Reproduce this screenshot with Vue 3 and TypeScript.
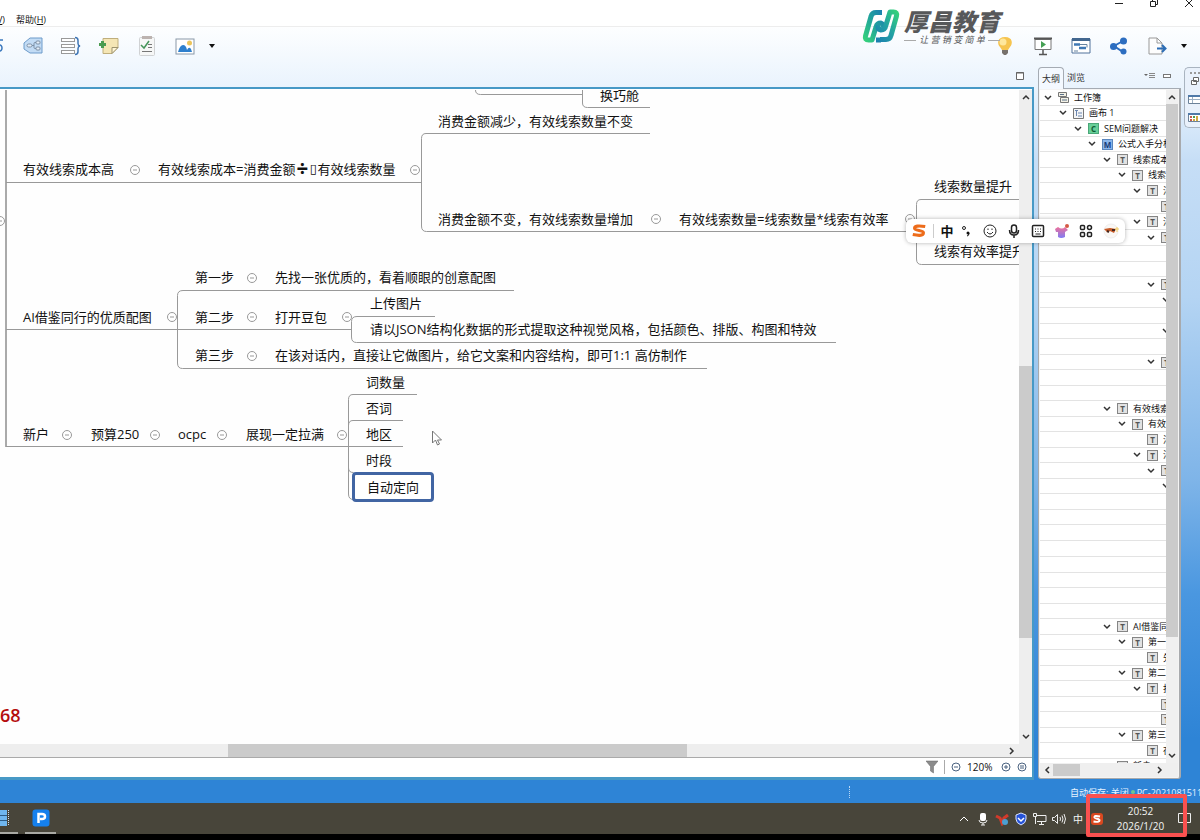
<script setup lang="ts">
interface Topic { x: number; y: number; text: string; selected?: boolean }
interface Row { level: number; icon?: 'book' | 'sheet' | 'C' | 'M' | 'T'; text?: string; open?: boolean }

const topics: Topic[] = [
  { x: 600, y: 5, text: '换巧舱' },
  { x: 438, y: 31, text: '消费金额减少，有效线索数量不变' },
  { x: 23, y: 79, text: '有效线索成本高' },
  { x: 438, y: 129, text: '消费金额不变，有效线索数量增加' },
  { x: 679, y: 129, text: '有效线索数量=线索数量*线索有效率' },
  { x: 934, y: 96, text: '线索数量提升' },
  { x: 934, y: 161, text: '线索有效率提升' },
  { x: 195, y: 187, text: '第一步' },
  { x: 275, y: 187, text: '先找一张优质的，看着顺眼的创意配图' },
  { x: 23, y: 227, text: 'AI借鉴同行的优质配图' },
  { x: 195, y: 227, text: '第二步' },
  { x: 275, y: 227, text: '打开豆包' },
  { x: 370, y: 213, text: '上传图片' },
  { x: 370, y: 239, text: '请以JSON结构化数据的形式提取这种视觉风格，包括颜色、排版、构图和特效' },
  { x: 195, y: 265, text: '第三步' },
  { x: 275, y: 265, text: '在该对话内，直接让它做图片，给它文案和内容结构，即可1:1 高仿制作' },
  { x: 366, y: 292, text: '词数量' },
  { x: 366, y: 318, text: '否词' },
  { x: 366, y: 344, text: '地区' },
  { x: 366, y: 370, text: '时段' },
  { x: 352, y: 397, text: '自动定向', selected: true },
  { x: 23, y: 344, text: '新户' },
  { x: 91, y: 344, text: '预算250' },
  { x: 178, y: 344, text: 'ocpc' },
  { x: 246, y: 344, text: '展现一定拉满' },
]
const folds: [number, number][] = [
  [0, 131], [135, 80], [415, 80], [656, 129], [910, 129], [252, 188], [172, 227], [252, 227],
  [347, 227], [252, 266], [67, 345], [155, 345], [222, 345], [342, 345],
]
const place = (t: Topic) => ({ left: `${t.x}px`, top: `${t.y - (t.selected ? 15 : 10)}px` })

const blank = (n: number): Row[] => Array.from({ length: n }, () => ({ level: 0 }))
const rows: Row[] = [
  { level: 0, icon: 'book', text: '工作簿', open: true },
  { level: 1, icon: 'sheet', text: '画布 1', open: true },
  { level: 2, icon: 'C', text: 'SEM问题解决', open: true },
  { level: 3, icon: 'M', text: '公式入手分析', open: true },
  { level: 4, icon: 'T', text: '线索成本高', open: true },
  { level: 5, icon: 'T', text: '线索成本', open: true },
  { level: 6, icon: 'T', text: '消费', open: true },
  { level: 7, icon: 'T' },
  { level: 6, icon: 'T', text: '消费', open: true },
  { level: 7, icon: 'T', open: true },
  ...blank(2),
  { level: 7, icon: 'T', open: true },
  { level: 8, open: true },
  ...blank(1),
  { level: 8, open: true },
  ...blank(1),
  { level: 7, icon: 'T', open: true },
  ...blank(2),
  { level: 4, icon: 'T', text: '有效线索成本高', open: true },
  { level: 5, icon: 'T', text: '有效线索', open: true },
  { level: 6, icon: 'T', text: '消费' },
  { level: 6, icon: 'T', text: '消费', open: true },
  { level: 7, icon: 'T', open: true },
  { level: 8, open: true },
  ...blank(8),
  { level: 4, icon: 'T', text: 'AI借鉴同行的优质配图', open: true },
  { level: 5, icon: 'T', text: '第一步', open: true },
  { level: 6, icon: 'T', text: '先找' },
  { level: 5, icon: 'T', text: '第二步', open: true },
  { level: 6, icon: 'T', text: '打开', open: true },
  { level: 7, icon: 'T' },
  { level: 7, icon: 'T' },
  { level: 5, icon: 'T', text: '第三步', open: true },
  { level: 6, icon: 'T', text: '在该' },
  { level: 4, icon: 'T', text: '新户' },
]
const indent = (level: number) => ({ paddingLeft: `${Math.round(level * 14.75) + 4}px` })
</script>

<template>
  <div class="screen">
    <div class="window">
      <header class="menubar">
        <nav class="menus">
          <button type="button" class="menu cut">(<u>V</u>)</button>
          <button type="button" class="menu">帮助(<u>H</u>)</button>
        </nav>
        <div class="winctl">
          <button type="button" aria-label="最小化"><svg width="10" height="10"><path d="M1 5.500h8" stroke="#222" /></svg></button>
          <button type="button" aria-label="还原"><svg width="10" height="10" fill="none" stroke="#222"><path d="M1.500 3.500h5v5h-5zM3.500 3V1.500h5v5H7" /></svg></button>
          <button type="button" aria-label="关闭"><svg width="10" height="10"><path d="M1 1l8 8M9 1L1 9" stroke="#222" /></svg></button>
        </div>
      </header>

      <div class="toolbar">
        <div class="tools">
          <button type="button" class="sliver" aria-label="联系"><svg width="4" height="16" viewBox="0 0 4 16" fill="none" stroke="#3b78bd" stroke-width="1.500"><path d="M3 2H-1v5C3 6 3 14 -1 13" /></svg></button>
          <button type="button" aria-label="外框"><svg width="20" height="20" viewBox="0 0 20 20" fill="none"><path d="M1 7l6-5h12v15H7l-6-4z" fill="#c3dcf5" stroke="#6d9bca" /><rect x="4" y="8" width="5" height="3" rx="1.500" fill="#e4eef8" stroke="#7c8fa5" /><path d="M9 9.500h2M15 6.500h-3q-1 0-1 1v4q0 1 1 1h3" stroke="#7c8fa5" /><rect x="13" y="5" width="4" height="3" rx="1" fill="#e4eef8" stroke="#7c8fa5" /><rect x="13" y="11" width="4" height="3" rx="1" fill="#e4eef8" stroke="#7c8fa5" /></svg></button>
          <button type="button" aria-label="概要"><svg width="20" height="20" viewBox="0 0 20 20" fill="none"><g fill="#fff" stroke="#999"><rect x=".5" y="2.500" width="13" height="3" /><rect x=".5" y="8.500" width="13" height="3" /><rect x=".5" y="14.500" width="13" height="3" /></g><path d="M14 1.500q3 0 3 3v3q0 2 2 2.500-2 .5-2 2.500v3q0 3-3 3" stroke="#3f76b5" stroke-width="1.500" /></svg></button>
          <button type="button" aria-label="备注"><svg width="20" height="20" viewBox="0 0 20 20"><path d="M4 2.500h15v9l-6 6H4z" fill="#f5e6b5" stroke="#bfae7c" /><path d="M19 11.500h-6v6z" fill="#fff6d6" stroke="#9d936f" /><path d="M0 8.500h7M3.500 5v7" stroke="#4b9b50" stroke-width="3" /></svg></button>
          <button type="button" aria-label="任务"><svg width="20" height="20" viewBox="0 0 20 20"><rect x="2.500" y="1.500" width="15" height="18" rx="1" fill="#f6f7f7" stroke="#d0d2d4" /><rect x="5" y="0" width="10" height="3" fill="#bcb3b0" /><path d="M4 9l3 3 5-7" fill="none" stroke="#45955a" stroke-width="1.500" /><path d="M11 8.500h4M11 11.500h4M5 15.500h10" stroke="#777" /></svg></button>
          <button type="button" aria-label="图片"><svg width="20" height="20" viewBox="0 0 20 20"><rect x="1" y="3" width="18" height="15" fill="#fff" stroke="#8998a8" /><path d="M3 16q2-7 5-7t4 5q2-4 4-1l1 3z" fill="#2e7fcd" /><circle cx="14.500" cy="7" r="2.500" fill="#ecc45c" /></svg></button>
          <button type="button" class="caret" aria-label="更多插入"><svg width="8" height="8"><path d="M1 2h6L4 6z" fill="#111" /></svg></button>
        </div>
        <div class="tools">
          <button type="button" aria-label="灵感"><svg width="20" height="20" viewBox="0 0 20 20"><path d="M10 1c8 0 8 7 5 10l-2 3H7l-2-3C2 8 2 1 10 1z" fill="#f6c44f" /><circle cx="8" cy="6" r="3.500" fill="#fee79d" /><path d="M7 14h6v3l-2 2H9l-2-2z" fill="#77716c" /></svg></button>
          <button type="button" aria-label="演示"><svg width="20" height="20" viewBox="0 0 20 20"><path d="M2 3.500h16v10H2z" fill="#fff" stroke="#777" /><path d="M1 2.500h18" stroke="#555" stroke-width="2" /><path d="M8 5l5 3.500L8 12z" fill="#45a054" /><path d="M10 14v4M6 18.500h8" stroke="#555" stroke-width="1.500" /></svg></button>
          <button type="button" aria-label="甘特图"><svg width="20" height="20" viewBox="0 0 20 20"><path d="M1 3h18v14H1z" fill="#fff" stroke="#50729b" /><path d="M1 3.500h18" stroke="#42678f" stroke-width="3" /><path d="M3 8.500h6M8 12h7" stroke="#3f78b4" stroke-width="2.500" /><path d="M9 8.500h7v3M3 15h4" fill="none" stroke="#65829f" /></svg></button>
          <button type="button" aria-label="分享"><svg width="20" height="20" viewBox="0 0 20 20" fill="#2c6dc0"><path d="M14 5L5 10l9 6" fill="none" stroke="#2c6dc0" stroke-width="2" /><circle cx="14.500" cy="5" r="3.500" /><circle cx="4.500" cy="10.500" r="3.500" /><circle cx="14.500" cy="15.500" r="3" /></svg></button>
          <button type="button" aria-label="导出"><svg width="20" height="20" viewBox="0 0 20 20"><path d="M2 2h8l5 5v11H2z" fill="#fdfdfd" stroke="#999" /><path d="M10 2v5h5" fill="none" stroke="#999" /><path d="M10 12.500h8M15 9l3.500 3.500L15 16" fill="none" stroke="#2c6db5" stroke-width="2" /></svg></button>
          <button type="button" class="caret" aria-label="更多导出"><svg width="8" height="8"><path d="M1 2h6L4 6z" fill="#111" /></svg></button>
        </div>
      </div>

      <div class="brand">
        <svg width="38" height="34" viewBox="0 0 38 34" fill="none" stroke-linejoin="round">
          <defs>
            <linearGradient id="leafA" x1="0" y1="1" x2="1" y2="0"><stop offset="0" stop-color="#34d07c" /><stop offset=".5" stop-color="#22a69a" /><stop offset="1" stop-color="#1b7fb0" /></linearGradient>
            <linearGradient id="leafB" x1="0" y1="1" x2="1" y2="0"><stop offset="0" stop-color="#1b7fb0" /><stop offset=".5" stop-color="#22a0a4" /><stop offset="1" stop-color="#34d07c" /></linearGradient>
          </defs>
          <path d="M20 3.500h-6q-4 0-5 4L3.500 27q-1 4 3 4H10l4-13q1-4 5-4 3 1 2 5" stroke="url(#leafA)" stroke-width="5" />
          <path d="M18 30.500h6q4 0 5-4L34.500 7q1-4-3-4H28l-4 13q-1 5-5 5-4-1-3-5M14 31h5" stroke="url(#leafB)" stroke-width="5" />
        </svg>
        <div class="brandtext">
          <strong>厚昌教育</strong>
          <small>让 营 销 变 简 单</small>
        </div>
      </div>

      <main class="workspace">
        <section class="editor">
          <div class="editorstrip">
            <button type="button" aria-label="最大化"><svg width="10" height="10"><path d="M1.500 1.500h7v7h-7z" fill="#fff" stroke="#666" /><path d="M1 2h8" stroke="#666" /></svg></button>
          </div>
          <div class="frame">
            <div class="viewport">
              <div class="canvas">
                <svg class="links" width="1019" height="420" fill="none" stroke="#999">
                  <path d="M6 0V357" stroke="#aaa" stroke-width="2" />
                  <path d="M475.500 0q0 4.500 5 4.500H583M582.500 0V13q0 4.500 5 4.500H650" />
                  <path d="M6 92.500H421M650 43.500H426q-4.500 0-4.500 5V136q0 5.500 5 5.500H917" />
                  <path d="M1019 109.500H921q-4.500 0-4.500 5V169q0 5.500 5 5.500H1019" />
                  <path d="M514 200.500H183q-5.500 0-5.500 5V273q0 5.500 5 5.500H707M6 239.500H352" />
                  <path d="M435 226.500H357q-5.500 0-5.500 5V247q0 5.500 5 5.500H836" />
                  <path d="M6 356.500H403M417 304.500H353q-4.500 0-4.500 5V404q0 5.500 5 5.500M403 330.500H353q-4.500 0-4.500 5M348.500 378q0 4.500 5 4.500" />
                </svg>
                <svg class="links" width="1019" height="420" fill="#fff" stroke="#999">
                  <g v-for="([x, y], i) in folds" :key="i"><circle :cx="x" :cy="y" r="4.500" /><path :d="`M${x - 2} ${y}h4`" /></g>
                </svg>
                <span v-for="(t, i) in topics" :key="i" class="topic" :class="{ selected: t.selected }" :style="place(t)">{{ t.text }}</span>
                <span class="topic formula">有效线索成本=消费金额<b>÷</b><i>▯</i>有效线索数量</span>
                <span class="total">68</span>
                <svg class="pointer" width="10" height="16" viewBox="0 0 10 16"><path d="M.5 1v12l3-3 2 5 2-1-2-4h4z" fill="#fff" stroke="#777" /></svg>
              </div>
              <div class="vbar">
                <button type="button" aria-label="向上"><svg width="8" height="6"><path d="M1 5l3-3 3 3" fill="none" stroke="#333" stroke-width="1.500" /></svg></button>
                <div class="track"><span class="before"></span><span class="thumb"></span><span class="after"></span></div>
                <button type="button" aria-label="向下"><svg width="8" height="6"><path d="M1 1l3 3 3-3" fill="none" stroke="#333" stroke-width="1.500" /></svg></button>
              </div>
            </div>
            <div class="hbar">
              <span class="before"></span><span class="thumb"></span><span class="after"></span>
              <button type="button" aria-label="向右"><svg width="6" height="8"><path d="M1 1l3 3-3 3" fill="none" stroke="#333" stroke-width="1.500" /></svg></button>
            </div>
            <div class="zoombar">
              <button type="button" aria-label="筛选"><svg width="12" height="14" viewBox="0 0 12 14"><path d="M0 1h12L7.500 6.500V13l-3-2V6.500z" fill="#8b8b8b" stroke="#666" stroke-width=".5" /></svg></button>
              <span class="rule"></span>
              <button type="button" aria-label="缩小"><svg width="10" height="10" fill="none" stroke="#4b6380"><circle cx="5" cy="5" r="4" /><path d="M3 5h4" /></svg></button>
              <span class="percent">120%</span>
              <button type="button" aria-label="放大"><svg width="10" height="10" fill="none" stroke="#4b6380"><circle cx="5" cy="5" r="4" /><path d="M3 5h4M5 3v4" /></svg></button>
              <button type="button" aria-label="实际大小"><svg width="10" height="10" fill="none" stroke="#4b6380"><circle cx="5" cy="5" r="4" /><path d="M3 4h4M3 6h4" /></svg></button>
            </div>
          </div>
        </section>

        <aside class="outline">
          <div class="tabs">
            <button type="button" class="tab active">大纲</button>
            <button type="button" class="tab">浏览</button>
            <span class="tabtools">
              <button type="button" aria-label="视图菜单"><svg width="12" height="8"><path d="M0 2h4L2 4z" fill="#666" /><path d="M5 1.500h6M5 3.500h6M5 5.500h6" stroke="#888" /></svg></button>
              <button type="button" aria-label="最小化视图"><svg width="8" height="8"><rect x=".5" y="2.500" width="7" height="3" fill="#fff" stroke="#777" /></svg></button>
            </span>
          </div>
          <div class="panel">
            <div class="treearea">
              <ul class="tree">
                <li v-for="(r, i) in rows" :key="i" :style="indent(r.level)">
                  <svg class="arrow" width="8" height="6"><path v-if="r.open" d="M1 1l3 3 3-3" fill="none" stroke="#333" stroke-width="1.500" /></svg>
                  <svg v-if="r.icon === 'book'" class="ico" width="11" height="11"><path d="M.5.500h8v4h-8zM2.500 5.500h8v5h-8z" fill="#f3f1e5" stroke="#777" /><path d="M2 2.500h4M4 8h5" stroke="#5a728c" /></svg>
                  <svg v-else-if="r.icon === 'sheet'" class="ico" width="11" height="11"><path d="M.5.500h10v10H.5z" fill="#f4f5f6" stroke="#777" /><path d="M2 2.500h3M5 5h4M5 8h4M3.500 3v5" stroke="#6c87b0" fill="none" /></svg>
                  <span v-else-if="r.icon" class="ico badge" :class="r.icon">{{ r.icon }}</span>
                  <span v-if="r.text" class="name">{{ r.text }}</span>
                </li>
              </ul>
              <div class="vbar side">
                <button type="button" aria-label="大纲向上"><svg width="8" height="6"><path d="M1 5l3-3 3 3" fill="none" stroke="#333" stroke-width="1.500" /></svg></button>
                <div class="track"><span class="thumb"></span><span class="after"></span></div>
                <button type="button" aria-label="大纲向下"><svg width="8" height="6"><path d="M1 1l3 3 3-3" fill="none" stroke="#333" stroke-width="1.500" /></svg></button>
              </div>
            </div>
            <div class="sidehbar">
              <button type="button" aria-label="大纲向左"><svg width="6" height="8"><path d="M5 1L2 4l3 3" fill="none" stroke="#333" stroke-width="1.500" /></svg></button>
              <span class="thumb"></span>
              <button type="button" aria-label="大纲向右"><svg width="6" height="8"><path d="M1 1l3 3-3 3" fill="none" stroke="#333" stroke-width="1.500" /></svg></button>
            </div>
          </div>
        </aside>

        <div class="trim">
          <span class="grip"></span>
          <button type="button" aria-label="还原视图"><svg width="10" height="10" fill="#fff" stroke="#666"><path d="M3.500 1.500h5v4h-5zM1.500 4.500h5v4h-5z" /></svg></button>
          <button type="button" aria-label="属性"><svg width="12" height="10"><path d="M.5 1.500h12v8H.5z" fill="#fff" stroke="#6c8299" /><path d="M0 2h12" stroke="#4f79a8" stroke-width="2" /><path d="M1 5.500h11M4.500 3v6" stroke="#9cb0c4" /></svg></button>
          <button type="button" aria-label="图标"><svg width="12" height="10"><path d="M.5 1.500h12v8H.5z" fill="#fff" stroke="#6c8299" /><path d="M0 2h12" stroke="#4f79a8" stroke-width="2" /><path d="M3 4v2M3 7v2" stroke="#c55b4d" stroke-width="2" /><path d="M6 4v2" stroke="#4a9b53" stroke-width="2" /><path d="M6 7v2M9 4v5" stroke="#d2a93f" stroke-width="2" /></svg></button>
        </div>
      </main>

      <footer class="status">
        <span class="statgrip"></span>
        <span class="stattext">自动保存: 关闭<em></em>PC-202108151150</span>
      </footer>
    </div>

    <div class="taskbar">
      <div class="apps">
        <button type="button" class="app first" aria-label="思维导图"><svg width="10" height="18" viewBox="0 0 10 18"><path d="M0 1h7v16H0z" fill="#6fb6ee" /><path d="M0 6.500h7M0 11.500h7" stroke="#2c5b86" /><path d="M8.500 1v16" stroke="#cfe3f2" stroke-dasharray="1 1" /></svg></button>
        <button type="button" class="app" aria-label="应用"><svg width="18" height="18" viewBox="0 0 18 18"><rect x=".5" y=".5" width="17" height="17" rx="3" fill="#1580ed" /><path d="M6.500 14V5H10q3 0 3 2.500T10 10H8" fill="none" stroke="#fff" stroke-width="2.500" /></svg></button>
      </div>
      <div class="tray">
        <button type="button" aria-label="显示隐藏的图标"><svg width="14" height="14"><path d="M3 9l4-4 4 4" fill="none" stroke="#fff" /></svg></button>
        <button type="button" aria-label="麦克风"><svg width="14" height="14"><rect x="4" y="1" width="6" height="8" rx="2" fill="#fff" /><path d="M3 8q0 3 4 3t4-3M7 11v2M5 13h4" fill="none" stroke="#eee" /></svg></button>
        <button type="button" aria-label="安全中心"><svg width="14" height="14"><path d="M1 4l4 2 2 5 2-5 4-3" fill="none" stroke="#d23a2b" stroke-width="3" /><circle cx="10" cy="10" r="3" fill="#4b9fd2" /></svg></button>
        <button type="button" aria-label="防护"><svg width="14" height="14"><path d="M7 1l5 2v4q0 4-5 6-5-2-5-6V3z" fill="#2552d8" stroke="#dce5ff" /><path d="M4 6l3 3 3-3" fill="none" stroke="#fff" stroke-width="1.500" /></svg></button>
        <button type="button" aria-label="网络"><svg width="14" height="14" fill="none" stroke="#eee"><path d="M4 3.500h9v6H4M8.500 10v2M6 12.500h5M.5 1.500h3v3h-3zM2.500 5v7" /></svg></button>
        <button type="button" aria-label="音量"><svg width="14" height="14" fill="none" stroke="#eee"><path d="M.5 5.500h2l3-3v9l-3-3h-2zM8 5q1 2 0 4M10 3.500q2 3.500 0 7M12 2q3 5 0 10" /></svg></button>
        <button type="button" class="lang">中</button>
        <button type="button" aria-label="搜狗输入法"><svg width="14" height="14"><rect x="1" y="1" width="12" height="12" rx="3" fill="#d9481f" /><path d="M10 4.500Q4 3 4.500 5.500C5 7 10 6.500 9.500 8.500Q9 10.500 3.500 9.500" fill="none" stroke="#fff" stroke-width="2" /></svg></button>
        <div class="clock"><time>20:52</time><time>2026/1/20</time></div>
        <button type="button" aria-label="通知"><svg width="14" height="14" fill="none" stroke="#eee"><path d="M1.500 1.500h12v9H9l-2 2v-2H1.500z" /></svg></button>
      </div>
      <span class="highlight"></span>
    </div>

    <div class="ime">
      <svg width="16" height="16" viewBox="0 0 18 16"><path d="M16 3Q4 1 4 5c0 3 10 2 10 5 0 4-7 3-12 2" fill="none" stroke="#ed6c1b" stroke-width="3.500" /></svg>
      <span class="imerule"></span>
      <button type="button" class="zh">中</button>
      <button type="button" aria-label="标点"><svg width="14" height="14"><circle cx="5" cy="4" r="1.500" fill="none" stroke="#222" /><circle cx="9" cy="9" r="1.500" fill="#111" /><path d="M10 9q0 3-2 3" fill="none" stroke="#111" /></svg></button>
      <button type="button" aria-label="表情"><svg width="14" height="14" fill="none" stroke="#222"><circle cx="7" cy="7" r="6" /><path d="M4 8q3 4 6 0M5 4.500V6M9 4.500V6" /></svg></button>
      <button type="button" aria-label="语音"><svg width="14" height="14" fill="none" stroke="#222" stroke-width="1.500"><rect x="4.500" y="1" width="5" height="8" rx="2.500" /><path d="M2.500 6q0 5 4.500 5t4.500-5M7 11v3" /></svg></button>
      <button type="button" aria-label="键盘"><svg width="14" height="14" fill="none" stroke="#222"><rect x="1.500" y="1.500" width="11" height="11" rx="1" stroke-width="1.500" /><path d="M4 5h6M4 7.500h6" stroke-dasharray="1 1.500" /><path d="M4.500 10h5" /></svg></button>
      <button type="button" aria-label="皮肤"><svg width="14" height="14"><defs><linearGradient id="shirt" x1="0" y1="0" x2="0" y2="1"><stop offset="0" stop-color="#ef7099" /><stop offset="1" stop-color="#7f7cf5" /></linearGradient></defs><path d="M0 5l3-2q4 3 7 0l3 3-3 2v5q-4 2-7 0V8L1 8z" fill="url(#shirt)" /><circle cx="12" cy="2" r="2" fill="#d45a45" /></svg></button>
      <button type="button" aria-label="工具箱"><svg width="14" height="14" fill="none" stroke="#222" stroke-width="1.500"><rect x="1.500" y="1.500" width="4" height="4" rx="1" /><circle cx="10.500" cy="3.500" r="2" /><rect x="1.500" y="8.500" width="4" height="4" rx="1" /><rect x="8.500" y="8.500" width="4" height="4" rx="1" /></svg></button>
      <button type="button" aria-label="助手"><svg width="16" height="16"><circle cx="8" cy="8" r="7" fill="#faf7f4" stroke="#eee" /><path d="M1 6l6-1 6 1-2 4-4-2-3 1z" fill="#c65a28" /><path d="M4 8l2 1M9 7h3" stroke="#43251c" stroke-width="2" /><path d="M14 4v5M12 6h4" stroke="#f3cb5e" /></svg></button>
    </div>
  </div>
</template>

<style>
body { background: #000; }
</style>

<style scoped>
* { box-sizing: border-box; }
button { appearance: none; margin: 0; padding: 0; border: 0; background: none; font: inherit; color: inherit; display: flex; align-items: center; justify-content: center; flex: none; }
svg { display: block; flex: none; overflow: hidden; }
.screen { position: relative; display: flex; flex-direction: column; min-height: 100vh; padding-bottom: 6px; overflow: hidden; background: #000; color: #111; font: 9px/14px "Open Sans", "Noto Sans CJK SC", sans-serif; }
.window { flex: 1; position: relative; display: flex; flex-direction: column; background: linear-gradient(180deg, #fff 0, #fdfeff 27px, #e9f3fd 11%, #c6def6 20%, #b4d4f3 37%, #7eb4e8 60%, #4a97e0 74%, #2e84d6 92%); }
.menubar { height: 27px; display: flex; justify-content: space-between; background: #fff; border-bottom: 1px solid #ededed; }
.menus { display: flex; align-items: flex-end; gap: 11px; }
.menu { height: 12px; line-height: 12px; white-space: nowrap; }
.menu.cut { width: 5px; justify-content: flex-end; overflow: hidden; }
.winctl { display: flex; gap: 25px; padding-right: 6px; height: 8px; align-items: flex-end; }
.toolbar { height: 40px; display: flex; justify-content: space-between; padding: 0 12px 2px 0; }
.tools { display: flex; align-items: center; gap: 18px; }
.sliver { margin-right: 1px; }
.caret { margin-left: -5px; }
.brand { position: absolute; top: 9px; right: 200px; display: flex; gap: 4px; }
.brandtext { display: flex; flex-direction: column; color: #57585a; font-style: italic; }
.brandtext strong { font-size: 24px; line-height: 25px; font-weight: 900; }
.brandtext small { display: flex; align-items: center; justify-content: space-between; font-size: 9px; line-height: 12px; white-space: nowrap; }
.brandtext small::before, .brandtext small::after { content: ""; width: 12px; height: 1px; background: #aaa; }
.workspace { flex: 1; display: flex; min-height: 0; }
.editor { flex: 1; min-width: 0; display: flex; flex-direction: column; }
.editorstrip { height: 20px; display: flex; justify-content: flex-end; align-items: center; padding: 0 9px 2px 0; }
.frame { flex: 1; display: flex; flex-direction: column; border: solid #4799c6; border-width: 2px 2px 3px 0; background: #fff; padding-top: 1px; }
.viewport { flex: 1; display: flex; min-height: 0; }
.canvas { flex: 1; min-width: 0; position: relative; overflow: hidden; background: #fefefe; }
.links { position: absolute; left: 0; top: 0; }
.topic { position: absolute; white-space: nowrap; font-size: 13px; line-height: 20px; }
.topic.selected { padding: 2px 12px; border: 3px solid #4165a3; border-radius: 4px; background: #fff; line-height: 20px; }
.formula { left: 158px; top: 69px; display: flex; align-items: center; }
.formula b { width: 14px; text-align: center; font-size: 20px; font-weight: 800; }
.formula i { width: 8px; text-align: center; font: 13px/20px "DejaVu Sans", sans-serif; }
.total { position: absolute; left: 0; top: 613px; font-size: 18px; line-height: 24px; font-weight: 600; color: #b50d0d; }
.pointer { position: absolute; left: 432px; top: 340px; }
.vbar { width: 13px; display: flex; flex-direction: column; background: #eee; }
.vbar button { height: 14px; }
.track { flex: 1; display: flex; flex-direction: column; }
.thumb { background: #cbcbcb; }
.track .before { flex: 262; }
.track .thumb { flex: 272; }
.track .after { flex: 92; }
.hbar { height: 13px; display: flex; background: #eee; padding-right: 13px; }
.hbar .before { flex: 228; }
.hbar .thumb { flex: 459; }
.hbar .after { flex: 318; }
.hbar button { width: 14px; }
.zoombar { height: 20px; display: flex; align-items: center; justify-content: flex-end; gap: 6px; padding: 0 5px 2px 0; border-top: 1px solid #aaa; font-size: 10px; }
.zoombar .rule { width: 1px; height: 14px; background: #aaa; }
.percent { width: 28px; }
.outline { width: 143px; margin-left: 4px; flex: none; display: flex; flex-direction: column; padding-bottom: 1px; }
.tabs { height: 22px; display: flex; align-items: stretch; border-bottom: 1px solid #a5abb3; }
.tab { padding: 0 3px; color: #333; }
.tab.active { width: 26px; height: 22px; border: 1px solid #a5abb3; border-bottom: 0; border-radius: 4px 4px 0 0; background: #f4f9ff; }
.tabtools { flex: 1; display: flex; justify-content: flex-end; align-items: center; gap: 7px; padding: 0 10px 4px 0; }
.panel { flex: 1; min-height: 0; display: flex; flex-direction: column; border: solid #a8aaad; border-width: 0 2px 1px 1px; border-radius: 0 0 3px 3px; background: #f4f4f4; padding: 1px; }
.treearea { flex: 1 1 0; min-height: 0; display: flex; overflow: hidden; }
.tree { flex: 1; min-width: 0; margin: 0; padding: 0; list-style: none; overflow: hidden; background: #fff; }
.tree li { height: 16px; display: flex; align-items: center; border-bottom: 1px solid #e3e3e3; overflow: hidden; }
.tree li:nth-child(even) { height: 15px; }
.tree li:nth-child(20n + 10) { height: 16px; }
.arrow { margin-right: 6px; }
.ico { width: 11px; height: 11px; flex: none; margin-right: 5px; }
.badge { border: 1px solid #858585; background: #e2e2e2; color: #555; font-size: 8px; line-height: 9px; font-weight: 700; text-align: center; }
.badge.C { background: #67cf98; border-color: #4aa778; color: #0c5a34; }
.badge.M { background: #8ab6ea; border-color: #5a86bd; color: #173c77; }
.name { white-space: nowrap; }
.side { width: 12px; background: #f0f0f0; }
.side .track .thumb { flex: 535; }
.side .track .after { flex: 112; }
.sidehbar { height: 14px; display: flex; align-items: center; background: #efefef; padding: 0 12px 0 0; }
.sidehbar button { width: 13px; height: 14px; }
.sidehbar .thumb { width: 27px; height: 12px; margin-right: auto; }
.trim { width: 16px; height: 61px; margin-left: 3px; flex: none; display: flex; flex-direction: column; align-items: flex-end; gap: 8px; padding-top: 4px; overflow: hidden; border: 1px solid #a9b4c0; border-right: 0; border-radius: 5px 0 0 5px; background: #e9f1fb; }
.grip { width: 10px; border-top: 2px dotted #999; margin-bottom: -6px; }
.status { height: 23px; display: flex; justify-content: flex-end; align-items: center; background: #2e84d6; color: #e8f3ff; }
.statgrip { height: 12px; border-left: 1px dotted #b9d8f5; margin-right: 220px; }
.stattext { width: 130px; overflow: hidden; white-space: nowrap; padding-top: 3px; }
.stattext em { display: inline-block; width: 4px; height: 4px; margin: 2px; border-radius: 2px; background: #71c690; }
.taskbar { position: relative; height: 31px; display: flex; justify-content: space-between; background: #48453a; color: #f5f5f5; }
.apps { display: flex; gap: 7px; }
.app { width: 31px; border-bottom: 2px solid #a9a9a4; }
.app.first { width: 18px; justify-content: flex-start; }
.tray { display: flex; align-items: center; gap: 5px; padding-right: 9px; }
.tray button { width: 14px; }
.lang { font-size: 10px; }
.clock { width: 63px; display: flex; flex-direction: column; align-items: center; font-size: 10px; line-height: 15px; }
.highlight { position: absolute; right: 13px; top: -9px; width: 101px; height: 43px; border: 4px solid #fa5150; border-radius: 2px; pointer-events: none; }
.ime { position: absolute; right: 75px; top: 219px; height: 24px; display: flex; align-items: center; gap: 10px; padding: 0 6px 0 5px; border-radius: 6px; background: #fff; box-shadow: 0 0 4px rgba(0, 0, 0, .3); }
.imerule { width: 1px; height: 14px; background: #ccc; margin: 0 -4px; }
.zh { width: 14px; font-size: 13px; font-weight: 700; margin-right: -5px; }
</style>
